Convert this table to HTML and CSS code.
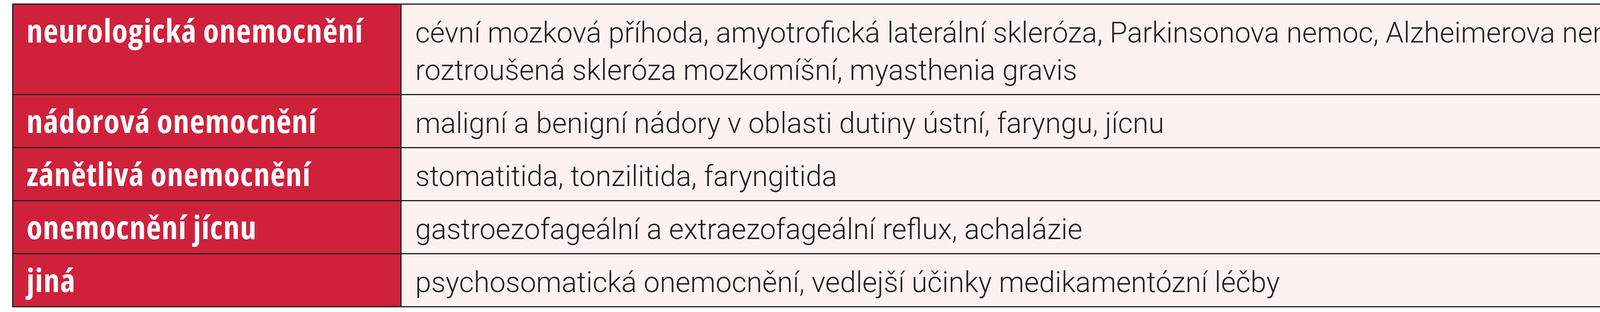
FILE: index.html
```html
<!DOCTYPE html>
<html lang="cs">
<head>
<meta charset="utf-8">
<title>Onemocnění</title>
<link rel="stylesheet" href="styles.css">
</head>
<body>
<div class="diag">
  <div class="cat">neurologická onemocnění</div>
  <div class="desc">cévní mozková příhoda, amyotrofická laterální skleróza, Parkinsonova nemoc, Alzheimerova nemoc,<br>roztroušená skleróza mozkomíšní, myasthenia gravis</div>

  <div class="cat">nádorová onemocnění</div>
  <div class="desc">maligní a benigní nádory v oblasti dutiny ústní, faryngu, jícnu</div>

  <div class="cat">zánětlivá onemocnění</div>
  <div class="desc">stomatitida, tonzilitida, faryngitida</div>

  <div class="cat">onemocnění jícnu</div>
  <div class="desc">gastroezofageální a extraezofageální reflux, achalázie</div>

  <div class="cat">jiná</div>
  <div class="desc">psychosomatická onemocnění, vedlejší účinky medikamentózní léčby</div>
</div>
</body>
</html>
```

FILE: styles.css
```css
html, body {
  margin: 0;
  padding: 0;
  background: #ffffff;
}

.diag {
  display: grid;
  grid-template-columns: 991px 3267px;
  gap: 3px;
  padding: 3px;
  width: max-content;
  margin: 9px 0 0 31px;
  background: #231f20;
}

.cat,
.desc {
  line-height: 96px;
  white-space: nowrap;
}

.cat {
  padding: 17px 30px 20px 34px;
  background: #cf213c;
  color: #ffffff;
  font-family: "Open Sans", sans-serif;
  font-weight: 700;
  font-stretch: 75%;
  font-size: 83px;
  letter-spacing: 1.3px;
}

.desc {
  padding: 24px 30px 13px 35px;
  background: #fcf3f0;
  color: #231f20;
  font-family: "Roboto", sans-serif;
  font-weight: 300;
  font-size: 73.3px;
}
```
